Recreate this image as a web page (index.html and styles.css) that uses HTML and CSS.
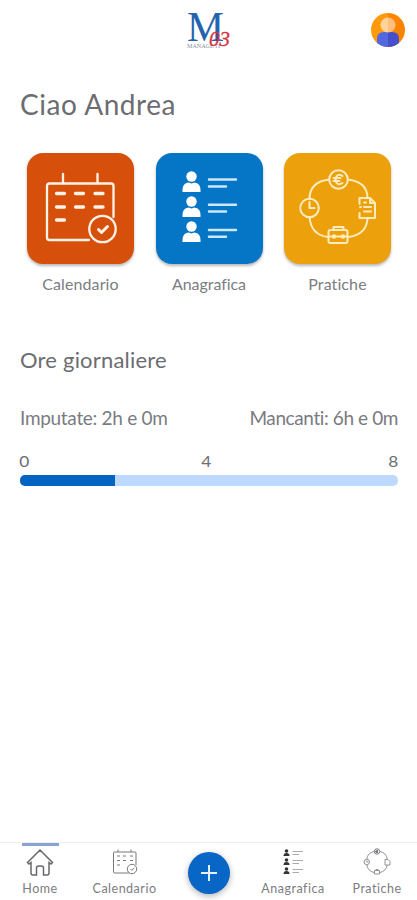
FILE: index.html
```html
<!DOCTYPE html>
<html lang="it">
<head>
<meta charset="utf-8">
<meta name="viewport" content="width=device-width, initial-scale=1">
<title>Home</title>
<link rel="stylesheet" href="styles.css">
</head>
<body>
<div class="app">
  <header class="header">
    <svg class="logo" width="48" height="40" viewBox="0 0 48 40">
      <text class="logo-m" x="2" y="31.500" textLength="37" lengthAdjust="spacingAndGlyphs">M</text>
      <text class="logo-sub" x="2" y="39" textLength="34" lengthAdjust="spacingAndGlyphs">MANAGE IT</text>
      <text class="logo-num" x="24" y="36.500" textLength="21" lengthAdjust="spacingAndGlyphs">03</text>
    </svg>
    <svg class="avatar" width="34" height="34" viewBox="0 0 34 34">
      <defs><clipPath id="disc"><circle cx="17" cy="17" r="17"/></clipPath></defs>
      <g clip-path="url(#disc)">
        <path fill="#ff9a0c" d="M0 0h17v34H0z"/><path fill="#fb8500" d="M17 0h17v34H17z"/>
        <path fill="#5368e0" d="M6 34V26q0-7 7-7h4v15z"/><path fill="#454fc9" d="M17 19h4q7 0 7 7v8H17z"/>
        <path fill="#ffd39a" d="M17 4.500a7.500 7.500 0 0 0 0 15z"/><path fill="#ffbf7d" d="M17 4.500a7.500 7.500 0 0 1 0 15z"/>
      </g>
    </svg>
  </header>

  <main class="main">
    <h1 class="greeting">Ciao Andrea</h1>
    <section class="tiles">
      <a class="tile">
        <span class="tile-box orange">
          <svg class="art" viewBox="0 0 107 111">
            <path d="M62 87H22.500q-2.500 0-2.500-2.500V33q0-2.500 2.500-2.500H84q2.500 0 2.500 2.500V64M36 30V21M70.500 30V21"/>
            <path class="dash" d="M29.500 40.500h8M48.500 40.500h8M68 40.500h8M29.500 54h8M48.500 54h8M68 54h8M29.500 67h8"/>
            <circle cx="75.500" cy="76" r="13.200"/>
            <path class="tick" d="M71.500 76.500l3 3 6-6"/>
          </svg>
        </span>
        <span class="tile-label l1">Calendario</span>
      </a>
      <a class="tile">
        <span class="tile-box blue">
          <svg class="art" viewBox="0 0 107 111">
            <g class="solid"><circle cx="35.500" cy="23.500" r="5.200"/><path d="M26.500 39V37q0-7 6-7.500l3 1 3-1q6 .5 6 7.500v2z"/>
            <circle cx="35.500" cy="48.500" r="5.200"/><path d="M26.500 64V62q0-7 6-7.500l3 1 3-1q6 .5 6 7.500v2z"/>
            <circle cx="35.500" cy="73.500" r="5.200"/><path d="M26.500 89V87q0-7 6-7.500l3 1 3-1q6 .5 6 7.500v2z"/></g>
            <path class="lines" d="M53 26.500h27M53 33.500h17M53 51.800h27M53 58.500h17M53 77h27M53 83.700h17"/>
          </svg>
        </span>
        <span class="tile-label l2">Anagrafica</span>
      </a>
      <a class="tile">
        <span class="tile-box amber">
          <svg class="art thin" viewBox="0 0 107 111">
            <path d="M45 26.500Q25.500 29 25.500 46M64 26.500Q83.500 29 83.500 45M25.500 64Q27 82 44 84M64 84Q82 82 83.500 66"/>
            <circle cx="54.500" cy="26.500" r="9.300"/><path d="M58.500 23q-6-3.500-7 3.500 1 7 7 3.500M49.500 25h7M49.500 28h6"/>
            <circle cx="25.500" cy="55" r="9.300"/><path d="M25.500 49v6h5"/>
            <path d="M75.500 51v-6H86l5 5v15H75.500v-5M86 45v5h5M80 54h7M80 58.500h7M76 54h1M80 49.500h2"/>
            <rect x="44.500" y="77" width="19" height="13" rx="2"/><path d="M49.500 77v-3h10v3M44.500 83.500h4M51.500 83.500h6M60 83.500h3.500"/><circle cx="50" cy="83.500" r="1.300"/><circle cx="59" cy="83.500" r="1.300"/>
          </svg>
        </span>
        <span class="tile-label l3">Pratiche</span>
      </a>
    </section>

    <section class="hours">
      <h2 class="subtitle"><span>Ore giornaliere</span></h2>
      <div class="totals"><span class="done">Imputate: 2h e 0m</span><span class="left">Mancanti: 6h e 0m</span></div>
      <div class="scale"><span>0</span><span>4</span><span>8</span></div>
      <div class="bar"><div class="bar-fill" style="width:25%"></div></div>
    </section>
  </main>

  <nav class="nav">
    <a class="nav-item home active">
      <svg width="28" height="28" viewBox="0 0 28 28"><path d="M1.500 14.500 14 2l12.500 12.500-1.500 1.500-2-1.500v10.500q0 2-2 2h-3.500V20q0-2-2-2h-3q-2 0-2 2v7H7q-2 0-2-2V14.500L3 16z"/></svg>
      <span>Home</span>
    </a>
    <a class="nav-item cal">
      <svg width="28" height="28" viewBox="0 0 28 28"><path d="M18 25H3.500q-1 0-1-1V5q0-1 1-1H24q1 0 1 1v12M7 4V1.500M20 4V1.500"/><path d="M6 8h3M12 8h3M19 8h3M6 12.500h3M12 12.500h3M19 12.500h3M6 17h3"/><circle cx="21" cy="21" r="4.700"/><path d="m19.500 21 1.300 1.300 2.500-2.500"/></svg>
      <span>Calendario</span>
    </a>
    <a class="add" aria-label="+"><svg width="18" height="18" viewBox="0 0 18 18"><path d="M9 1v16M1 9h16"/></svg></a>
    <a class="nav-item ana">
      <svg width="28" height="28" viewBox="0 0 28 28"><g class="people"><circle cx="7.500" cy="3" r="1.800"/><path d="M4.500 8q0-3 3-3t3 3z"/><circle cx="7.500" cy="12" r="1.800"/><path d="M4.500 17q0-3 3-3t3 3z"/><circle cx="7.500" cy="21" r="1.800"/><path d="M4.500 26q0-3 3-3t3 3z"/></g><path class="faint" d="M13.500 3.500H24M13.500 6.500H20M13.500 12.500H24M13.500 15.500H20M13.500 21.500H24M13.500 24.500H20"/></svg>
      <span>Anagrafica</span>
    </a>
    <a class="nav-item pra">
      <svg width="28" height="28" viewBox="0 0 28 28"><path class="ring" d="M11 3.500Q4.500 5 3.800 11M17 3.500q6.500 1.500 7.200 7.500M3.800 17q1 6 7.200 7.500M24.200 17q-1 6-7.200 7.500"/><circle cx="14" cy="3.500" r="2.700"/><path d="M15 2.500q-3-.5-2 2h2M12 3.500h3"/><circle class="ring" cx="3.800" cy="14" r="2.700"/><path class="ring" d="M3.800 12.500V14h1.500M22 11.500h3l2 2v3.500h-5zM11.500 22.500h5v3.500h-5zM13 22.500v-1h2v1"/></svg>
      <span>Pratiche</span>
    </a>
  </nav>
</div>
</body>
</html>
```
FILE: styles.css
```css
* { box-sizing: border-box; }
body { margin: 0; background: #fff; color: #6b6d71; font-family: Lato, sans-serif; font-variant-ligatures: none; }
.app { height: 900px; display: flex; flex-direction: column; overflow: hidden; }
.header { height: 60px; flex: none; display: grid; grid-template-columns: 1fr 48px 1fr; padding: 9px 12px 0 13px; }
.logo { grid-column: 2; overflow: visible; }
.logo-m { font: 43px "Liberation Serif", serif; fill: #2463ae; }
.logo-num { font: italic 21px "Liberation Serif", serif; fill: #d03443; stroke: #d03443; stroke-width: .3; }
.logo-sub { font: 6px "Liberation Serif", serif; fill: #8b929c; }
.avatar { justify-self: end; margin-top: 4px; }
.main { flex: 1; padding: 0 19px 0 20px; }
.greeting { margin: 26px 0 0; font-size: 28px; line-height: 36px; font-weight: 400; letter-spacing: .55px; }
.tiles { display: grid; grid-template-columns: repeat(3, 107px); gap: 21.500px; margin: 31px 0 0 7px; }
.tile { display: flex; flex-direction: column; align-items: center; }
.tile-box { width: 100%; height: 111px; border-radius: 16px; box-shadow: 0 2px 3px rgba(0,0,0,.28); }
.orange { background: #d6500b; }
.blue { background: #0575c6; }
.amber { background: #eca00c; }
.tile-label { margin-top: 10px; font-size: 16px; line-height: 20px; color: #7b7d81; white-space: nowrap; letter-spacing: .1px; }
.l2 { letter-spacing: -.05px; }
.art { display: block; width: 107px; height: 111px; fill: none; stroke: #fff3e8; stroke-width: 2.300; stroke-linecap: round; stroke-linejoin: round; }
.art .dash { stroke-width: 3.300; }
.art .tick { stroke-width: 3; }
.art .solid { fill: #fff; stroke: none; }
.art .lines { stroke: #cce8fc; stroke-width: 2.500; }
.art.thin { stroke: #ffebbc; stroke-width: 2; }
.hours { margin-top: 52px; }
.subtitle { margin: 0; font-size: 22px; line-height: 28px; font-weight: 400; letter-spacing: .2px; }
.totals { display: flex; justify-content: space-between; margin-top: 32px; font-size: 19px; line-height: 24px; color: #797b7f; letter-spacing: -.3px; }
.left { letter-spacing: -.4px; }
.scale { display: flex; justify-content: space-between; margin-top: 22px; font-size: 15px; line-height: 18px; }
.scale span { transform: scaleX(1.15); }
.scale span:nth-child(2) { margin-right: 6px; }
.bar { height: 11px; margin-top: 5px; border-radius: 5px; background: #bed9ff; overflow: hidden; }
.bar-fill { height: 100%; background: #0563c1; }
.nav { height: 58px; flex: none; display: grid; grid-template-columns: 80px 89px 80px 88px 80px; border-top: 1px solid #eee; }
.nav-item { display: flex; flex-direction: column; align-items: center; padding-top: 5px; font-size: 12.500px; line-height: 16px; letter-spacing: .5px; color: #7b7d81; }
.nav-item svg { fill: none; stroke: #77797d; stroke-width: 1; flex: none; }
.nav-item span { margin-top: 5px; white-space: nowrap; }
.nav-item.active { background: linear-gradient(#8aa3d4, #8aa3d4) center top / 37px 3px no-repeat; }
.nav-item.active svg { stroke: #66686c; stroke-width: 1.500; }
.nav-item .people { fill: #333; stroke: none; }
.nav-item .faint { stroke: #aaa; }
.nav-item .ring { stroke: #909296; }
.add { width: 42px; height: 42px; margin: 9px auto 0; display: flex; align-items: center; justify-content: center; border-radius: 50%; background: #0866c6; box-shadow: 0 2px 6px rgba(0,0,0,.3); }
.add svg { stroke: #e4f1ff; stroke-width: 2; }
```
